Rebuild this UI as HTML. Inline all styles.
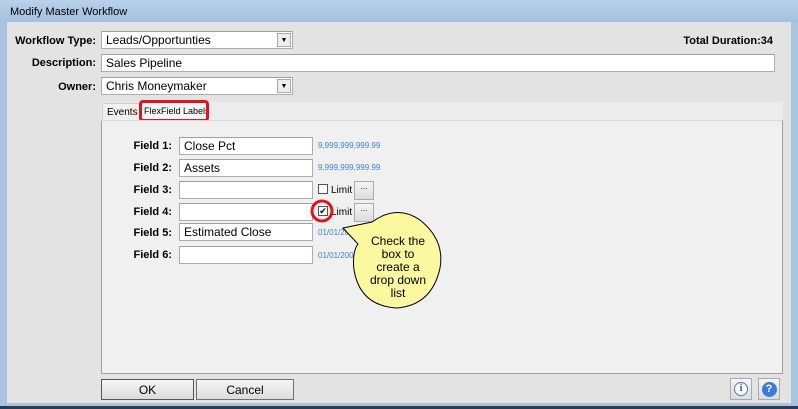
<!DOCTYPE html><html><head><style>
*{box-sizing:border-box;margin:0;padding:0}
body{width:798px;height:409px;overflow:hidden;background:#a9c4e0;font-family:"Liberation Sans",sans-serif;font-size:12px;position:relative}
.a{position:absolute;white-space:nowrap}
.title{left:0;top:0;width:798px;height:23px;background:linear-gradient(#b9d1ea,#a4c0de);color:#000;font-size:11px;padding:6px 0 0 10px}
.win{left:7px;top:22px;width:784px;height:381px;background:#e3e3e3}
.lbl{font-weight:bold;text-align:right;font-size:11px}
.inp{background:#fff;border:1px solid #abadb3;border-top-color:#a0a0a0;font-size:12px;padding:1px 4px;height:18px}
.dd{position:absolute;right:1px;top:1px;width:14px;height:14px;background:#eee;border:1px solid #aaa;font-size:7px;text-align:center;line-height:13px}
.blue{color:#3f7fd8;font-size:8px}
.btn{background:linear-gradient(#f5f5f5,#dcdcdc);border:1px solid #707070;text-align:center;font-size:12px}
</style></head><body>
<div class="a title">Modify Master Workflow</div>
<div class="a" style="left:0;top:406px;width:798px;height:3px;background:#2a3a50"></div>
<div class="a win"></div>
<div class="a lbl" style="left:10px;top:35px;width:86px">Workflow Type:</div>
<div class="a inp" style="left:101px;top:31px;width:192px">Leads/Opportunties<div class="dd">▼</div></div>
<div class="a lbl" style="left:10px;top:57px;width:86px">Description:</div>
<div class="a inp" style="left:101px;top:54px;width:674px">Sales Pipeline</div>
<div class="a lbl" style="left:10px;top:81px;width:86px">Owner:</div>
<div class="a inp" style="left:101px;top:77px;width:192px">Chris Moneymaker<div class="dd">▼</div></div>
<div class="a lbl" style="left:600px;top:35px;width:173px">Total Duration:34</div>
<div class="a" style="left:101px;top:102px;width:682px;height:19px;background:#ececec"></div>
<div class="a" style="left:102px;top:103px;width:38px;height:18px;border:1px solid #ccc;border-bottom:none;font-size:10px;padding:3px 0 0 4px;background:#f0f0f0">Events</div>
<div class="a" style="left:140px;top:102px;width:69px;height:19px;background:#f7f7f7;font-size:9px;padding:4px 0 0 4px">FlexField Labels</div>
<div class="a" style="left:139px;top:100px;width:70px;height:22px;border:3px solid #e0141c;border-radius:4px"></div>
<div class="a" style="left:101px;top:120px;width:682px;height:254px;background:#f0f0f0;border:1px solid #a0a0a0;border-top:1px solid #d8d8d8"></div>

<div class="a lbl" style="left:120px;top:140px;width:52px">Field 1:</div>
<div class="a inp" style="left:179px;top:137px;width:134px">Close Pct</div>
<div class="a blue" style="left:318px;top:141px">9,999,999,999.99</div>
<div class="a lbl" style="left:120px;top:162px;width:52px">Field 2:</div>
<div class="a inp" style="left:179px;top:159px;width:134px">Assets</div>
<div class="a blue" style="left:318px;top:163px">9,999,999,999.99</div>
<div class="a lbl" style="left:120px;top:184px;width:52px">Field 3:</div>
<div class="a inp" style="left:179px;top:181px;width:134px"></div>
<div class="a" style="left:318px;top:184px;width:10px;height:10px;border:1px solid #555;background:#fff"></div>
<div class="a" style="left:331px;top:185px;font-size:10px">Limit</div>
<div class="a btn" style="left:354px;top:181px;width:20px;height:19px;font-size:8px;border-color:#aaa">...</div>
<div class="a lbl" style="left:120px;top:206px;width:52px">Field 4:</div>
<div class="a inp" style="left:179px;top:203px;width:134px"></div>
<div class="a" style="left:318px;top:206px;width:10px;height:10px;border:1px solid #555;background:#fff;font-size:9px;line-height:8px;text-align:center">✔</div>
<div class="a" style="left:331px;top:207px;font-size:10px">Limit</div>
<div class="a btn" style="left:354px;top:203px;width:20px;height:19px;font-size:8px;border-color:#aaa">...</div>
<div class="a lbl" style="left:120px;top:227px;width:52px">Field 5:</div>
<div class="a inp" style="left:179px;top:223px;width:134px">Estimated Close</div>
<div class="a blue" style="left:318px;top:228px">01/01/2000</div>
<div class="a lbl" style="left:120px;top:249px;width:52px">Field 6:</div>
<div class="a inp" style="left:179px;top:246px;width:134px"></div>
<div class="a blue" style="left:318px;top:251px">01/01/2000</div>

<svg class="a" style="left:0;top:0" width="798" height="409">
<circle cx="322" cy="211" r="10" fill="none" stroke="#e0141c" stroke-width="3"/>
<path d="M343 228 L372 222 Q397 204 420 220 Q445 240 440 268 Q432 305 397 308 Q360 306 354 270 Q352 252 358 244 Z" fill="#fcf8a0" stroke="#000" stroke-width="1"/>
</svg>
<div class="a" style="left:358px;top:235px;width:80px;text-align:center;font-size:12px;line-height:13px">Check the<br>box to<br>create a<br>drop down<br>list</div>

<div class="a btn" style="left:101px;top:379px;width:93px;height:21px;padding-top:3px;border-color:#555">OK</div>
<div class="a btn" style="left:196px;top:379px;width:98px;height:21px;padding-top:3px">Cancel</div>
<div class="a btn" style="left:730px;top:378px;width:22px;height:22px;border-color:#aaa"><div style="margin:3px auto;width:14px;height:14px;border-radius:50%;background:#fff;border:1px solid #4a7ac0;color:#2a5aa0;font-weight:bold;font-size:10px;line-height:12px;font-family:'Liberation Serif',serif">i</div></div>
<div class="a btn" style="left:758px;top:378px;width:22px;height:22px;border-color:#aaa"><div style="margin:3px auto;width:15px;height:15px;border-radius:50%;background:#3a7ad8;color:#fff;font-weight:bold;font-size:11px;line-height:15px">?</div></div>
</body></html>
